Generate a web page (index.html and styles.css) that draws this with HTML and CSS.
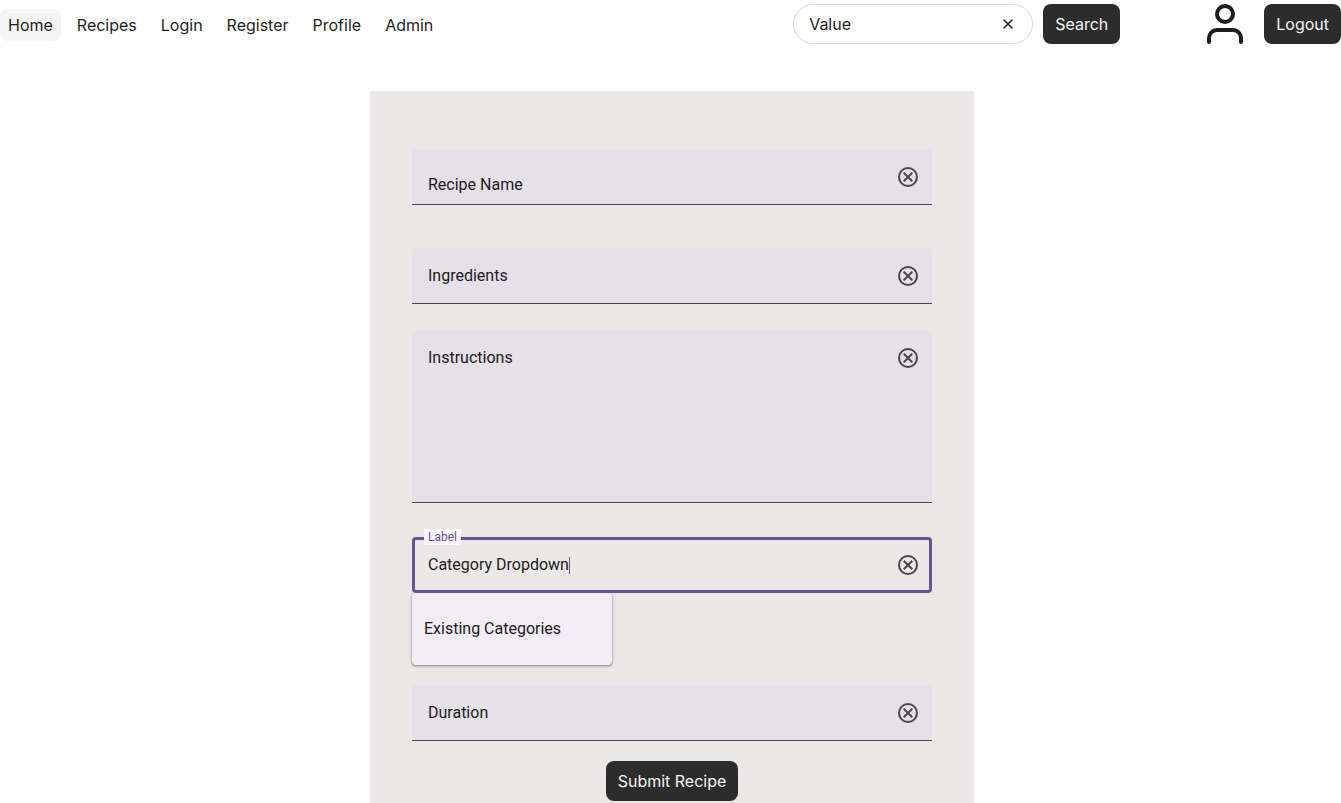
FILE: index.html
```html
<!DOCTYPE html>
<html lang="en">
<head>
<meta charset="utf-8">
<meta name="viewport" content="width=device-width, initial-scale=1">
<title>Submit Recipe</title>
<link rel="stylesheet" href="styles.css">
</head>
<body>
<svg class="sprite" aria-hidden="true">
  <symbol id="cancel" viewBox="0 0 24 24">
    <circle cx="12" cy="12" r="9" fill="none" stroke="currentColor" stroke-width="2"/>
    <path d="M8.4 17 12 13.4 15.6 17 17 15.6 13.4 12 17 8.4 15.6 7 12 10.6 8.4 7 7 8.4 10.6 12 7 15.6z" fill="currentColor"/>
  </symbol>
</svg>
<header class="header">
  <nav class="nav" aria-label="Main">
    <a class="nav-link nav-link-active" href="#" aria-current="page">Home</a>
    <a class="nav-link" href="#">Recipes</a>
    <a class="nav-link" href="#">Login</a>
    <a class="nav-link" href="#">Register</a>
    <a class="nav-link" href="#">Profile</a>
    <a class="nav-link" href="#">Admin</a>
  </nav>
  <form class="search" role="search">
    <div class="search-box">
      <input class="search-input" type="text" aria-label="Search recipes" value="Value">
      <button class="icon-button" type="button" aria-label="Clear search">
        <svg width="16" height="16" viewBox="0 0 16 16" fill="none" stroke="#1e1e1e" stroke-width="1.6" stroke-linecap="round"><path d="M12 4 4 12M4 4l8 8"/></svg>
      </button>
    </div>
    <button class="button" type="submit">Search</button>
  </form>
  <div class="account">
    <a class="avatar" href="#" aria-label="Account">
      <svg width="48" height="48" viewBox="0 0 48 48" fill="none" stroke="#1e1e1e" stroke-width="4" stroke-linecap="round" stroke-linejoin="round"><path d="M40 42v-4a8 8 0 0 0-8-8H16a8 8 0 0 0-8 8v4"/><circle cx="24" cy="14" r="8"/></svg>
    </a>
    <button class="button" type="button">Logout</button>
  </div>
</header>
<main class="main">
  <form class="recipe-form">
    <div class="field field-name">
      <input class="field-input" type="text" aria-label="Recipe Name" placeholder="Recipe Name">
      <button class="icon-button" type="button" aria-label="Clear recipe name"><svg width="24" height="24"><use href="#cancel"/></svg></button>
    </div>
    <div class="field field-ingredients">
      <input class="field-input" type="text" aria-label="Ingredients" placeholder="Ingredients">
      <button class="icon-button" type="button" aria-label="Clear ingredients"><svg width="24" height="24"><use href="#cancel"/></svg></button>
    </div>
    <div class="field field-instructions">
      <textarea class="field-input" rows="6" aria-label="Instructions" placeholder="Instructions"></textarea>
      <button class="icon-button" type="button" aria-label="Clear instructions"><svg width="24" height="24"><use href="#cancel"/></svg></button>
    </div>
    <div class="category">
      <div class="outlined">
        <label class="outlined-label" for="category">Label</label>
        <div class="outlined-value">
          <input class="outlined-input" id="category" type="text" role="combobox" aria-expanded="true" aria-controls="categories" value="Category Dropdown">
          <span class="caret" aria-hidden="true"></span>
        </div>
        <button class="icon-button" type="button" aria-label="Clear category"><svg width="24" height="24"><use href="#cancel"/></svg></button>
      </div>
      <ul class="menu" id="categories" role="listbox" aria-label="Categories">
        <li class="menu-item" role="option">Existing Categories</li>
      </ul>
    </div>
    <div class="field field-duration">
      <input class="field-input" type="text" aria-label="Duration" placeholder="Duration">
      <button class="icon-button" type="button" aria-label="Clear duration"><svg width="24" height="24"><use href="#cancel"/></svg></button>
    </div>
    <button class="button submit" type="submit">Submit Recipe</button>
  </form>
</main>
</body>
</html>
```
FILE: styles.css
```css
* {
  box-sizing: border-box;
}

body {
  margin: 0;
  background: #fff;
  color: #1e1e1e;
  font: 400 16px/24px Inter, sans-serif;
}

input,
textarea,
button {
  margin: 0;
  padding: 0;
  border: 0;
  background: none;
  color: inherit;
  font: inherit;
}

input,
textarea {
  outline: none;
}

button {
  cursor: pointer;
}

svg {
  display: block;
}

.sprite {
  position: absolute;
  width: 0;
  height: 0;
}

/* Header */

.header {
  display: flex;
  align-items: center;
  height: 48px;
}

.nav {
  display: flex;
  gap: 8px;
  margin-right: auto;
  padding-top: 2px;
}

.nav-link {
  padding: 8px;
  border-radius: 8px;
  color: #1e1e1e;
  line-height: 16px;
  text-decoration: none;
}

.nav-link-active {
  background: #f5f5f5;
}

.search {
  display: flex;
  gap: 10px;
}

.search-box {
  display: flex;
  align-items: center;
  width: 240px;
  height: 40px;
  padding: 0 16px 0 15px;
  border: 1px solid #d9d9d9;
  border-radius: 20px;
}

.search-input {
  flex: 1;
  min-width: 0;
}

.button {
  height: 40px;
  padding: 0 12px;
  border-radius: 8px;
  background: #2c2c2c;
  color: #f5f5f5;
  line-height: 16px;
}

.account {
  display: flex;
  align-items: center;
  gap: 15px;
  margin-left: 81px;
}

/* Recipe form */

.main {
  display: flex;
  justify-content: center;
  padding: 43px 0 0 3px;
}

.recipe-form {
  display: flex;
  flex-direction: column;
  width: 100%;
  max-width: 604px;
  padding: 58px 42px 2px;
  background: #ece8e7;
  color: #1d1b20;
  font-family: Roboto, sans-serif;
}

.field {
  display: flex;
  align-items: center;
  min-height: 56px;
  padding: 0 12px 0 16px;
  border-bottom: 1px solid #49454f;
  border-radius: 4px 4px 0 0;
  background: #e6e0e9;
}

.field-input {
  flex: 1;
  min-width: 0;
  height: 24px;
}

.field-input::placeholder {
  color: #1d1b20;
  opacity: 1;
}

.icon-button {
  flex: none;
  color: #49454f;
}

.field-name {
  margin-bottom: 43px;
}

.field-name .field-input {
  height: 54px;
  padding-top: 15px;
}

.field-ingredients {
  margin-bottom: 26px;
}

.field-instructions {
  align-items: flex-start;
  margin-bottom: 34px;
  padding-top: 16px;
  padding-bottom: 12px;
}

.field-instructions .field-input {
  height: 144px;
  resize: none;
}

.category {
  margin-bottom: 20px;
}

.outlined {
  position: relative;
  display: flex;
  align-items: center;
  justify-content: space-between;
  height: 56px;
  padding: 0 9px 0 13px;
  border: 3px solid #65558f;
  border-radius: 4px;
}

.outlined-label {
  position: absolute;
  top: -11px;
  left: 9px;
  padding: 0 4px;
  background: #fef7ff;
  color: #65558f;
  font-size: 12px;
  line-height: 16px;
}

.outlined-value {
  display: flex;
  align-items: center;
}

.outlined-input {
  field-sizing: content;
  height: 24px;
  caret-color: transparent;
}

.caret {
  width: 1px;
  height: 17px;
  background: #65558f;
}

.menu {
  width: 200px;
  margin: 0;
  padding: 8px 0;
  border-radius: 4px;
  background: #f3edf7;
  box-shadow: 0 1px 2px rgba(0, 0, 0, 0.3), 0 1px 3px 1px rgba(0, 0, 0, 0.15);
  list-style: none;
}

.menu-item {
  padding: 16px 12px;
}

.submit {
  align-self: center;
  margin-top: 20px;
  font-family: Inter, sans-serif;
}
```
